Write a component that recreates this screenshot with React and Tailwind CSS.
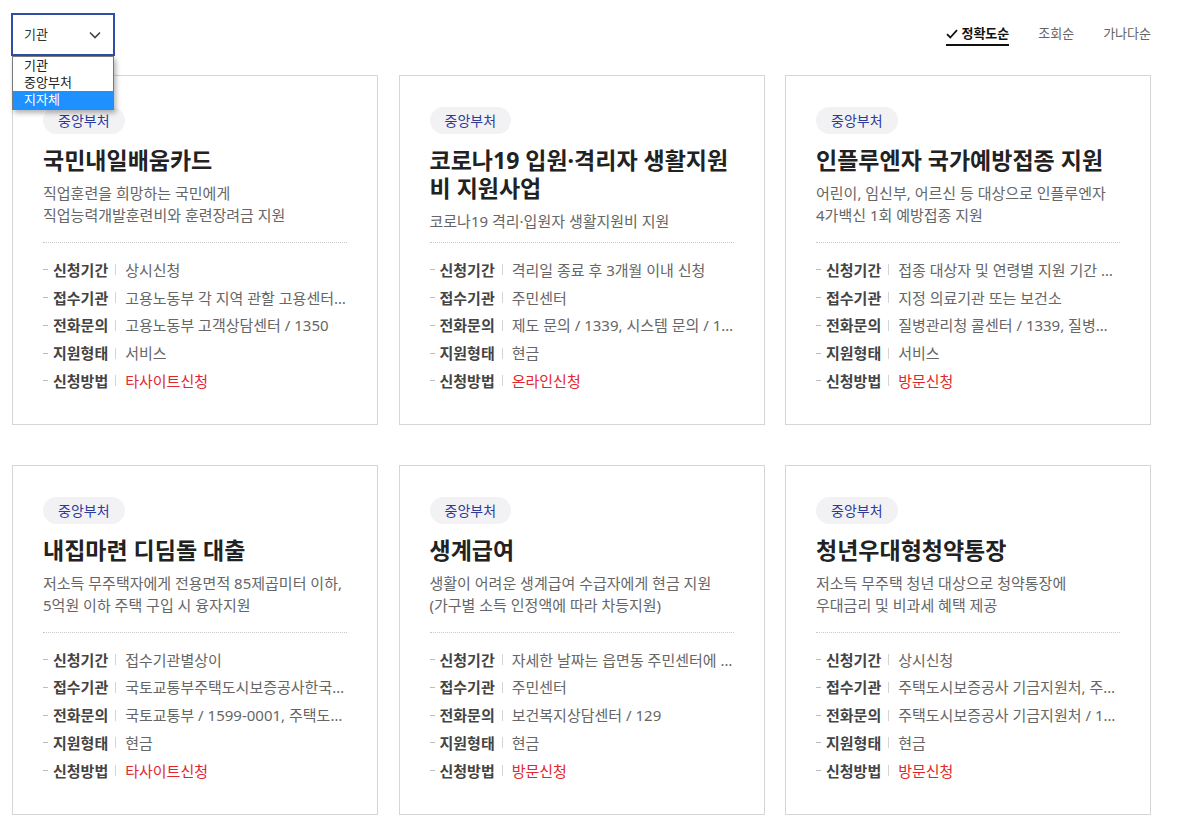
import React from "react";

const cards = [
  {
    badge: "중앙부처",
    title: "국민내일배움카드",
    desc: ["직업훈련을 희망하는 국민에게", "직업능력개발훈련비와 훈련장려금 지원"],
    rows: [
      ["신청기간", "상시신청"],
      ["접수기관", "고용노동부 각 지역 관할 고용센터 및 직업훈련기관"],
      ["전화문의", "고용노동부 고객상담센터 / 1350"],
      ["지원형태", "서비스"],
      ["신청방법", "타사이트신청", true],
    ],
  },
  {
    badge: "중앙부처",
    title: "코로나19 입원·격리자 생활지원비 지원사업",
    desc: ["코로나19 격리·입원자 생활지원비 지원"],
    rows: [
      ["신청기간", "격리일 종료 후 3개월 이내 신청"],
      ["접수기관", "주민센터"],
      ["전화문의", "제도 문의 / 1339, 시스템 문의 / 1522-3232"],
      ["지원형태", "현금"],
      ["신청방법", "온라인신청", true],
    ],
  },
  {
    badge: "중앙부처",
    title: "인플루엔자 국가예방접종 지원",
    desc: ["어린이, 임신부, 어르신 등 대상으로 인플루엔자", "4가백신 1회 예방접종 지원"],
    rows: [
      ["신청기간", "접종 대상자 및 연령별 지원 기간 상이"],
      ["접수기관", "지정 의료기관 또는 보건소"],
      ["전화문의", "질병관리청 콜센터 / 1339, 질병관리청 예방접종관리과"],
      ["지원형태", "서비스"],
      ["신청방법", "방문신청", true],
    ],
  },
  {
    badge: "중앙부처",
    title: "내집마련 디딤돌 대출",
    desc: ["저소득 무주택자에게 전용면적 85제곱미터 이하,", "5억원 이하 주택 구입 시 융자지원"],
    rows: [
      ["신청기간", "접수기관별상이"],
      ["접수기관", "국토교통부주택도시보증공사한국주택금융공사"],
      ["전화문의", "국토교통부 / 1599-0001, 주택도시보증공사 / 1566-9009"],
      ["지원형태", "현금"],
      ["신청방법", "타사이트신청", true],
    ],
  },
  {
    badge: "중앙부처",
    title: "생계급여",
    desc: ["생활이 어려운 생계급여 수급자에게 현금 지원", "(가구별 소득 인정액에 따라 차등지원)"],
    rows: [
      ["신청기간", "자세한 날짜는 읍면동 주민센터에 문의하세요"],
      ["접수기관", "주민센터"],
      ["전화문의", "보건복지상담센터 / 129"],
      ["지원형태", "현금"],
      ["신청방법", "방문신청", true],
    ],
  },
  {
    badge: "중앙부처",
    title: "청년우대형청약통장",
    desc: ["저소득 무주택 청년 대상으로 청약통장에", "우대금리 및 비과세 혜택 제공"],
    rows: [
      ["신청기간", "상시신청"],
      ["접수기관", "주택도시보증공사 기금지원처, 주택도시보증공사 각 지사"],
      ["전화문의", "주택도시보증공사 기금지원처 / 1566-9009"],
      ["지원형태", "현금"],
      ["신청방법", "방문신청", true],
    ],
  },
];

function Card({ card }) {
  return (
    <div className="border border-[#d6d6d6] bg-white px-[30px] pt-[31px] pb-[29px]">
      <span className="inline-flex h-[27px] items-center rounded-full bg-[#f2f2f4] px-[15px] text-[14px] text-[#2c3a9c]">
        {card.badge}
      </span>
      <div className="mt-[12px] h-[80px]">
        <h3 className="text-[23px] font-bold leading-[28px] text-[#222]">
          {card.title}
        </h3>
        <p className="mt-[8px] text-[15px] leading-[22px] text-[#666]">
          {card.desc.map((d, i) => (
            <React.Fragment key={i}>
              {i > 0 && <br />}
              {d}
            </React.Fragment>
          ))}
        </p>
      </div>
      <div className="mt-[16px] border-t border-dotted border-[#c9c9c9]" />
      <ul className="mt-[13px]">
        {card.rows.map(([label, value, red], i) => (
          <li key={i} className="flex h-[27.75px] items-center text-[15px] leading-[20px]">
            <span className="mr-[5px] h-px w-[5px] shrink-0 bg-[#bdbdbd]" />
            <span className="shrink-0 font-bold text-[#444]">{label}</span>
            <span className="ml-[7px] mr-[9px] h-[11px] w-px shrink-0 bg-[#d4d4d4]" />
            <span
              className={
                "min-w-0 truncate " + (red ? "text-[#e3262d]" : "text-[#666]")
              }
            >
              {value}
            </span>
          </li>
        ))}
      </ul>
    </div>
  );
}

export default function App() {
  return (
    <div
      className="min-h-screen bg-white"
      style={{ fontFamily: '"Noto Sans", "Noto Sans CJK KR", sans-serif' }}
    >
      <div className="ml-[12px] w-[1139px] pt-[13px] pb-[40px]">
        <div className="flex h-[43px] items-center justify-between">
          <div className="relative -ml-px">
            <div className="flex h-[43px] w-[104px] items-center justify-between border-2 border-[#2f4ea3] bg-white pl-[11px] pr-[12px] text-[13px] text-[#333]">
              <span>기관</span>
              <svg width="12" height="8" viewBox="0 0 12 8" fill="none">
                <path d="M1 1.5 L6 6.5 L11 1.5" stroke="#444" strokeWidth="1.6" />
              </svg>
            </div>
            <div className="absolute left-px top-[43px] z-10 w-[102px] border border-[#7a7a7a] bg-white text-[13px] leading-[17px] text-[#222] shadow-[2px_3px_5px_rgba(0,0,0,0.3)]">
              <div className="h-[17px] pl-[11px]">기관</div>
              <div className="h-[17px] pl-[11px]">중앙부처</div>
              <div className="h-[18px] bg-[#1e90ff] pl-[11px] text-white">지자체</div>
            </div>
          </div>
          <div className="flex items-center gap-[29px] pt-[1px] text-[13px]">
            <span className="flex items-center gap-[3px] border-b-2 border-[#111] pb-[1px] font-bold text-[#111]">
              <svg width="12" height="10" viewBox="0 0 12 10" fill="none">
                <path d="M1 5.2 L4.3 8.5 L11 1.2" stroke="#111" strokeWidth="1.8" />
              </svg>
              정확도순
            </span>
            <span className="pb-[3px] text-[#666]">조회순</span>
            <span className="pb-[3px] text-[#666]">가나다순</span>
          </div>
        </div>
        <div className="mt-[19px] grid grid-cols-[366px_366px_366px] gap-x-[20.5px] gap-y-[40px]">
          {cards.map((c, i) => (
            <Card key={i} card={c} />
          ))}
        </div>
      </div>
    </div>
  );
}
